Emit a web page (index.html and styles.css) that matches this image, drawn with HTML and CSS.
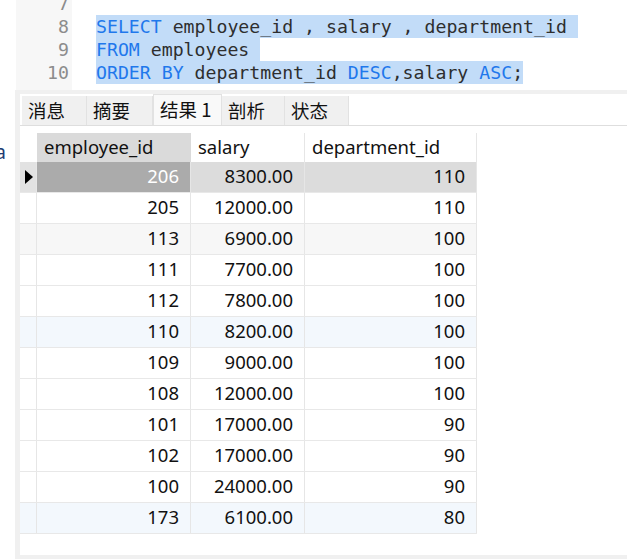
FILE: index.html
```html
<!DOCTYPE html>
<html>
<head>
<meta charset="utf-8">
<link rel="stylesheet" href="styles.css">
</head>
<body>
<div class="page">
  <div class="editor">
    <div class="edge"></div>
    <div class="gutter">
      <div class="ln">7</div>
      <div class="ln">8</div>
      <div class="ln">9</div>
      <div class="ln">10</div>
    </div>
    <div class="code">
      <div class="line"></div>
      <div class="line"><span class="sel"><span class="kw">SELECT</span> employee_id , salary , department_id </span></div>
      <div class="line"><span class="sel"><span class="kw">FROM</span> employees </span></div>
      <div class="line"><span class="sel"><span class="kw">ORDER BY</span> department_id <span class="kw">DESC</span>,salary <span class="kw">ASC</span>;</span></div>
    </div>
  </div>
  <div class="lower">
    <div class="leftcol"><span class="cut">a</span></div>
    <div class="panel">
      <div class="tabs">
        <div class="tab t1">消息</div>
        <div class="tab t2">摘要</div>
        <div class="tab t3 active">结果 1</div>
        <div class="tab t4">剖析</div>
        <div class="tab t5">状态</div>
      </div>
      <div class="grid">
        <div class="row head">
          <div class="ind"></div>
          <div class="cell hsel">employee_id</div>
          <div class="cell">salary</div>
          <div class="cell">department_id</div>
        </div>
        <div class="row body selrow">
          <div class="ind"><span class="tri"></span></div>
          <div class="cell num cur">206</div>
          <div class="cell num">8300.00</div>
          <div class="cell num">110</div>
        </div>
        <div class="row body">
          <div class="ind"></div><div class="cell num">205</div><div class="cell num">12000.00</div><div class="cell num">110</div>
        </div>
        <div class="row body gray">
          <div class="ind"></div><div class="cell num">113</div><div class="cell num">6900.00</div><div class="cell num">100</div>
        </div>
        <div class="row body">
          <div class="ind"></div><div class="cell num">111</div><div class="cell num">7700.00</div><div class="cell num">100</div>
        </div>
        <div class="row body">
          <div class="ind"></div><div class="cell num">112</div><div class="cell num">7800.00</div><div class="cell num">100</div>
        </div>
        <div class="row body blue">
          <div class="ind"></div><div class="cell num">110</div><div class="cell num">8200.00</div><div class="cell num">100</div>
        </div>
        <div class="row body">
          <div class="ind"></div><div class="cell num">109</div><div class="cell num">9000.00</div><div class="cell num">100</div>
        </div>
        <div class="row body">
          <div class="ind"></div><div class="cell num">108</div><div class="cell num">12000.00</div><div class="cell num">100</div>
        </div>
        <div class="row body">
          <div class="ind"></div><div class="cell num">101</div><div class="cell num">17000.00</div><div class="cell num">90</div>
        </div>
        <div class="row body">
          <div class="ind"></div><div class="cell num">102</div><div class="cell num">17000.00</div><div class="cell num">90</div>
        </div>
        <div class="row body">
          <div class="ind"></div><div class="cell num">100</div><div class="cell num">24000.00</div><div class="cell num">90</div>
        </div>
        <div class="row body blue">
          <div class="ind"></div><div class="cell num">173</div><div class="cell num">6100.00</div><div class="cell num">80</div>
        </div>
      </div>
    </div>
  </div>
</div>
</body>
</html>
```

FILE: styles.css
```css
* { box-sizing: border-box; }
html, body { margin: 0; padding: 0; background: #fff; }
.page {
  width: 627px;
  height: 559px;
  overflow: hidden;
  display: flex;
  flex-direction: column;
}
.editor {
  height: 90px;
  flex: none;
  display: flex;
  overflow: hidden;
  font-family: "DejaVu Sans Mono", monospace;
  font-size: 18.2px;
}
.edge { width: 16px; flex: none; background: #fff; }
.gutter {
  width: 56px;
  flex: none;
  background: #f7f7f7;
  color: #8c8c8c;
  text-align: right;
  padding-right: 3px;
  margin-top: -8px;
  padding-bottom: 8px;
}
.ln, .line { height: 23px; line-height: 23px; white-space: pre; }
.code {
  flex: 1;
  padding-left: 24px;
  margin-top: -8px;
  color: #2e2e2e;
}
.sel {
  display: inline-block;
  height: 23px;
  background: #c2dcf8;
}
.kw { color: #1f78ec; }

.lower { flex: 1; display: flex; min-height: 0; }
.leftcol {
  width: 15px;
  flex: none;
  overflow: hidden;
  display: flex;
  justify-content: flex-end;
  padding-top: 49px;
  padding-right: 9px;
  font-family: "Noto Sans", sans-serif;
  font-size: 19px;
  color: #1f3b73;
  line-height: 26px;
}
.cut { white-space: nowrap; }
.panel {
  flex: 1;
  border-top: 4px solid #f0f0f0;
  border-left: 5px solid #f0f0f0;
  border-bottom: 4px solid #f0f0f0;
  background: #fff;
  display: flex;
  flex-direction: column;
}
.tabs {
  height: 32px;
  flex: none;
  display: flex;
  align-items: flex-end;
  padding-left: 2px;
  border-bottom: 1px solid #dedede;
  font-family: "Noto Sans CJK SC", "Noto Sans", sans-serif;
  font-size: 18.5px;
  color: #111;
}
.tab {
  height: 29px;
  line-height: 28px;
  background: #f0f0f0;
  border-right: 1px solid #e2e2e2;
  padding-left: 6px;
}
.t1 { width: 65px; }
.t2 { width: 66px; }
.t3 { width: 69px; }
.t4 { width: 63px; }
.t5 { width: 64px; }
.tab.active {
  height: 31px;
  background: #f9f9f9;
  border: 1px solid #e2e2e2;
  border-bottom: none;
  line-height: 29px;
}
.grid {
  margin-top: 7px;
  font-family: "Noto Sans", sans-serif;
  font-size: 18.5px;
  color: #111;
}
.row {
  display: grid;
  grid-template-columns: 17px 154px 114px 172px;
  width: 457px;
}
.row.head { height: 29px; line-height: 28px; }
.row.body { height: 31px; line-height: 28px; border-bottom: 1px solid #e8e8e8; }
.cell {
  border-right: 1px solid #e6e6e6;
  padding: 0 11px 0 7px;
  white-space: nowrap;
  overflow: hidden;
}
.ind { border-right: 1px solid #e6e6e6; position: relative; }
.head .ind { border-right: none; }
.hsel { background: #dadada; border-right-color: #dadada; }
.num { text-align: right; }
.gray { background: #f7f7f7; }
.blue { background: #f3f8fd; }
.selrow .cell { background: #dcdcdc; }
.selrow .ind { background: #e2e2e2; }
.selrow .cell.cur { background: #ababab; color: #fff; }
.tri {
  position: absolute;
  left: 5px;
  top: 8px;
  width: 0;
  height: 0;
  border-top: 7px solid transparent;
  border-bottom: 7px solid transparent;
  border-left: 8px solid #000;
}
```
